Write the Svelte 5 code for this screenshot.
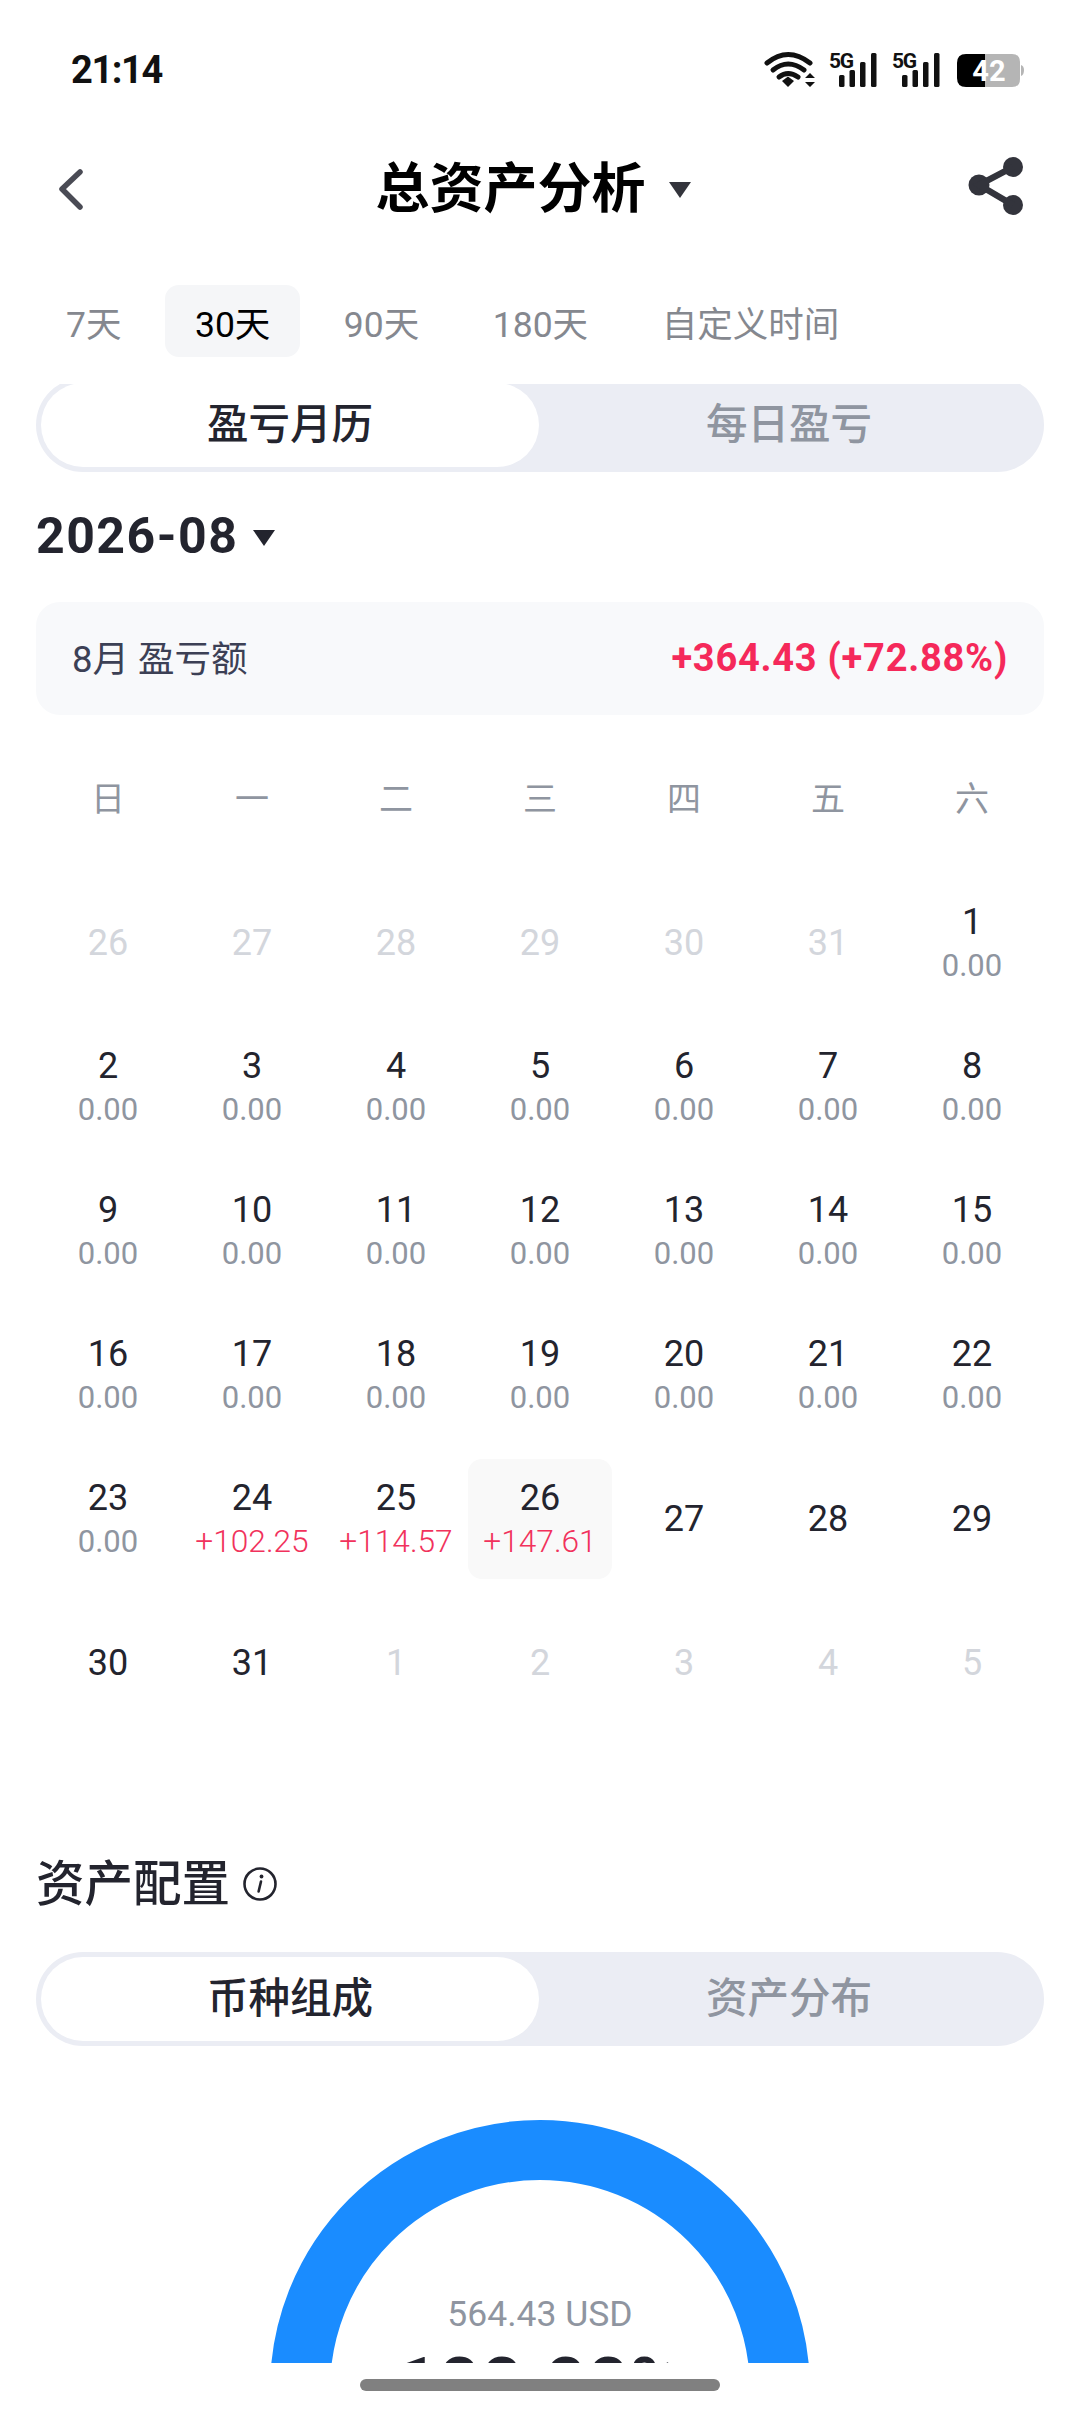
<script>
  const tabs = ['7天', '30天', '90天', '180天', '自定义时间'];
  const weekdays = ['日', '一', '二', '三', '四', '五', '六'];
  const prev = [26, 27, 28, 29, 30, 31];
  const next = [1, 2, 3, 4, 5];
  const gains = { 24: '+102.25', 25: '+114.57', 26: '+147.61' };
  const cells = [
    ...prev.map((d) => ({ d, muted: true })),
    ...Array.from({ length: 31 }, (_, i) => {
      const d = i + 1;
      if (gains[d]) return { d, v: gains[d], up: true, sel: d === 26 };
      return d <= 23 ? { d, v: '0.00' } : { d };
    }),
    ...next.map((d) => ({ d, muted: true }))
  ];
  const sigX = [0, 63];
</script>

<div class="page">
  <div class="status">
    <span class="time">21:14</span>
    <svg class="sysicons" width="270" height="44" viewBox="760 48 270 44">
      <g fill="none" stroke="#111" stroke-width="5" stroke-linecap="round">
        <path d="M767 63 Q788 46 810 63" />
        <path d="M773 70 Q788 58 804 70" />
        <path d="M779 77 Q788 70 798 77" />
      </g>
      <path d="M782 81 L788 76.5 L794 81 L788 87 Z" fill="#111" />
      <path d="M805 78 L810 73 L815 78 Z M805 82 L815 82 L810 87 Z" fill="#111" />
      {#each sigX as dx}
        <g transform="translate({dx} 0)" fill="#111">
          <text class="fiveg" x="829" y="67.5">5G</text>
          <rect x="839" y="75" width="5.5" height="12" rx="1.5" />
          <rect x="849.5" y="70" width="5.5" height="17" rx="1.5" />
          <rect x="860" y="62" width="5.5" height="25" rx="1.5" />
          <rect x="871" y="53" width="5.5" height="34" rx="1.5" />
        </g>
      {/each}
      <path d="M966 54 H985 V87 H966 Q957 87 957 78 V63 Q957 54 966 54 Z" fill="#000" />
      <path d="M985 54 H1012 Q1020 54 1020 62 V79 Q1020 87 1012 87 H985 Z" fill="#b5b5b5" />
      <path d="M1021 65 Q1024 66 1024 70 Q1024 75 1021 76 Z" fill="#b5b5b5" />
      <text class="batt" x="989" y="81" text-anchor="middle">42</text>
    </svg>
  </div>

  <header class="nav">
    <svg width="100" height="100" viewBox="0 0 100 100">
      <path d="M50 32 L32 49 L50 67" fill="none" stroke="#4a4b55" stroke-width="5.5" stroke-linecap="round" stroke-linejoin="round" />
    </svg>
    <div class="title-wrap">
      <h1>总资产分析</h1>
      <span class="tri tri-title"></span>
    </div>
    <svg width="100" height="100" viewBox="0 0 100 100">
      <g fill="#33343c">
        <circle cx="63" cy="27" r="10" />
        <circle cx="29" cy="45" r="10.5" />
        <circle cx="63" cy="65" r="10" />
      </g>
      <path d="M63 27 L29 45 L63 65" fill="none" stroke="#33343c" stroke-width="6.5" />
    </svg>
  </header>

  <nav class="tabs">
    {#each tabs as t, i}
      <span class="tab" class:on={i === 1}>{t}</span>
    {/each}
  </nav>

  <main class="scroller">
    <div class="seg seg-first">
      <span class="seg-on">盈亏月历</span>
      <span class="seg-off">每日盈亏</span>
    </div>

    <div class="month">
      <span>2026-08</span>
      <span class="tri tri-month"></span>
    </div>

    <div class="summary">
      <span class="sum-label">8月 盈亏额</span>
      <span class="sum-value">+364.43 (+72.88%)</span>
    </div>

    <div class="weekdays">
      {#each weekdays as w}<span>{w}</span>{/each}
    </div>

    <div class="grid">
      {#each cells as c}
        <div class="cell" class:sel={c.sel}>
          <span class="day" class:muted={c.muted}>{c.d}</span>
          {#if c.v}<span class="val" class:up={c.up}>{c.v}</span>{/if}
        </div>
      {/each}
    </div>

    <div class="section-head">
      <h2>资产配置</h2>
      <svg width="36" height="36" viewBox="0 0 36 36">
        <circle cx="18" cy="18" r="15.5" fill="none" stroke="#23242e" stroke-width="2.6" />
        <circle cx="19.5" cy="10.5" r="1.9" fill="#23242e" />
        <path d="M19 15.5 L16.6 25.5" fill="none" stroke="#23242e" stroke-width="2.6" stroke-linecap="round" />
      </svg>
    </div>

    <div class="seg">
      <span class="seg-on">币种组成</span>
      <span class="seg-off">资产分布</span>
    </div>

    <div class="chart">
      <svg class="ring" width="1008" height="317" viewBox="0 0 1008 317">
        <circle cx="504" cy="344" r="240" fill="none" stroke="#1a8cff" stroke-width="60" />
      </svg>
      <span class="chart-sub">564.43 USD</span>
      <span class="chart-pct">100.00%</span>
    </div>
  </main>

  <div class="home"><span></span></div>
</div>

<style>
  :global(body) {
    margin: 0;
    background: #fff;
  }
  .page {
    width: 1080px;
    height: 2412px;
    display: flex;
    flex-direction: column;
    overflow: hidden;
    background: #fff;
    font-family: Roboto, "Noto Sans CJK SC", sans-serif;
    color: #23242e;
  }
  .status {
    height: 140px;
    flex: none;
    box-sizing: border-box;
    padding: 48px 50px 0 71px;
    display: flex;
    justify-content: space-between;
    align-items: flex-start;
  }
  .time {
    font-size: 38px;
    font-weight: 700;
    line-height: 44px;
    letter-spacing: -1.4px;
    color: #111;
  }
  .fiveg {
    font-size: 21px;
    font-weight: 700;
    font-family: Roboto, sans-serif;
    letter-spacing: -1.2px;
  }
  .batt {
    font-size: 29px;
    font-weight: 700;
    fill: #fff;
    font-family: Roboto, sans-serif;
  }
  .nav {
    height: 100px;
    flex: none;
    display: flex;
    align-items: center;
    padding: 0 30px;
  }
  .title-wrap {
    flex: 1;
    display: flex;
    justify-content: center;
    align-items: center;
    gap: 23px;
    padding-right: 14px;
  }
  h1 {
    margin: 0;
    font-size: 54px;
    line-height: 60px;
    font-weight: 700;
    color: #000;
  }
  .tri {
    display: block;
    width: 0;
    height: 0;
    border-left: 11px solid transparent;
    border-right: 11px solid transparent;
    border-top: 16px solid #33343c;
  }
  .tabs {
    flex: none;
    margin: 45px 0 27px 36px;
    display: flex;
    gap: 13.5px;
  }
  .tab {
    height: 72px;
    padding: 1px 30px 0;
    display: flex;
    align-items: center;
    font-size: 35.5px;
    color: #85888f;
    border-radius: 14px;
    box-sizing: border-box;
  }
  .tab.on {
    background: #f5f6f8;
    color: #000;
  }
  .scroller {
    height: 1979px;
    flex: none;
    overflow: hidden;
    padding: 0 36px;
  }
  .seg {
    height: 94px;
    box-sizing: border-box;
    padding: 5px;
    border-radius: 47px;
    background: #ebedf4;
    display: grid;
    grid-template-columns: 498px 1fr;
    font-size: 41.5px;
    line-height: 84px;
    text-align: center;
  }
  .seg-first {
    margin-top: -6px;
  }
  .seg-on {
    background: #fff;
    border-radius: 42px;
    color: #23242e;
    font-weight: 500;
  }
  .seg-off {
    color: #8f95a0;
    font-weight: 500;
  }
  .month {
    margin-top: 24px;
    height: 80px;
    display: flex;
    align-items: center;
    gap: 15px;
    font-size: 50px;
    font-weight: 700;
    letter-spacing: 1.5px;
    color: #23242e;
  }
  .tri-month {
    border-top-color: #23242e;
    margin-top: 4px;
  }
  .summary {
    margin-top: 26px;
    height: 113px;
    box-sizing: border-box;
    padding: 0 36px;
    border-radius: 24px;
    background: #f8f9fb;
    display: flex;
    align-items: center;
    justify-content: space-between;
  }
  .sum-label {
    font-size: 36.5px;
    color: #3c4055;
    margin-top: -5px;
  }
  .sum-value {
    font-size: 38px;
    font-weight: 700;
    letter-spacing: 0.75px;
    color: #f5295a;
    margin-top: -2px;
  }
  .weekdays {
    margin-top: 60px;
    height: 48px;
    display: grid;
    grid-template-columns: repeat(7, 144px);
    text-align: center;
    font-size: 34px;
    line-height: 48px;
    color: #8f95a0;
  }
  .grid {
    margin-top: 60px;
    display: grid;
    grid-template-columns: repeat(7, 144px);
    grid-auto-rows: 120px;
    row-gap: 24px;
  }
  .cell {
    display: flex;
    flex-direction: column;
    align-items: center;
    justify-content: center;
    border-radius: 14px;
  }
  .cell.sel {
    background: #f9f9f9;
  }
  .day {
    font-size: 36px;
    line-height: 42px;
    color: #23242e;
  }
  .day.muted {
    color: #d3d6dc;
  }
  .val {
    font-size: 31px;
    line-height: 44px;
    margin-top: 1px;
    margin-bottom: -3px;
    color: #8f95a0;
  }
  .val.up {
    font-size: 31.7px;
    font-weight: 300;
    color: #f1325c;
  }
  .section-head {
    margin-top: 131px;
    height: 60px;
    display: flex;
    align-items: center;
    gap: 12px;
  }
  h2 {
    margin: 2px 0 0;
    font-size: 48.5px;
    line-height: 60px;
    font-weight: 500;
    color: #23242e;
  }
  .section-head + .seg {
    margin-top: 38px;
  }
  .chart {
    position: relative;
    height: 317px;
  }
  .ring {
    display: block;
  }
  .chart-sub,
  .chart-pct {
    position: absolute;
    left: 0;
    right: 0;
    text-align: center;
  }
  .chart-sub {
    top: 245px;
    font-size: 35.5px;
    line-height: 46px;
    color: #8f95a0;
  }
  .chart-pct {
    top: 303px;
    font-size: 74px;
    line-height: 72px;
    font-weight: 700;
    color: #23242e;
  }
  .home {
    flex: none;
    padding-top: 16px;
    display: flex;
    justify-content: center;
  }
  .home span {
    width: 360px;
    height: 12px;
    border-radius: 6px;
    background: #808080;
  }
</style>
